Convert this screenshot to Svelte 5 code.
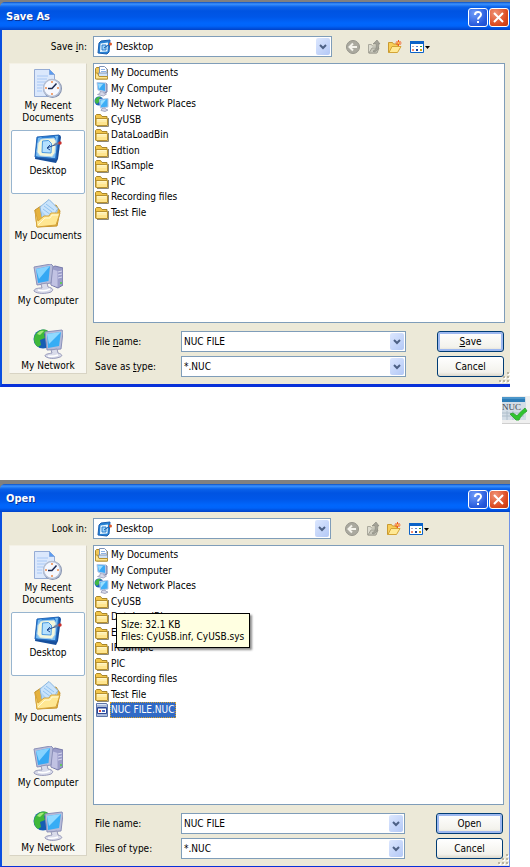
<script lang="ts">
  //! Save and Open file dialogs for NUC tables, with the toolbar button between them
  interface FileEntry {
    name: string;
    icon: string;
  }

  interface Dialog {
    id: string;
    title: string;
    look: string[];
    nameLabel: string[];
    typeLabel: string[];
    action: string[];
    files: FileEntry[];
    selected?: string;
    tip?: string[];
  }

  const places = [
    { name: 'My Recent Documents', icon: 'recent' },
    { name: 'Desktop', icon: 'desktop' },
    { name: 'My Documents', icon: 'documents' },
    { name: 'My Computer', icon: 'computer' },
    { name: 'My Network', icon: 'network' },
  ];

  const desktopFiles: FileEntry[] = [
    { name: 'My Documents', icon: 'docfolder' },
    { name: 'My Computer', icon: 'pc' },
    { name: 'My Network Places', icon: 'net' },
    ...['CyUSB', 'DataLoadBin', 'Edtion', 'IRSample', 'PIC', 'Recording files', 'Test File'].map(
      (name) => ({ name, icon: 'folder' })
    ),
  ];

  // Labels are split as [before, access key, after]
  const dialogs: Dialog[] = [
    {
      id: 'save',
      title: 'Save As',
      look: ['Save ', 'i', 'n:'],
      nameLabel: ['File ', 'n', 'ame:'],
      typeLabel: ['Save as ', 't', 'ype:'],
      action: ['', 'S', 'ave'],
      files: desktopFiles,
    },
    {
      id: 'open',
      title: 'Open',
      look: ['Look in:', '', ''],
      nameLabel: ['File name:', '', ''],
      typeLabel: ['Files of type:', '', ''],
      action: ['Open', '', ''],
      files: [...desktopFiles, { name: 'NUC FILE.NUC', icon: 'nuc' }],
      selected: 'NUC FILE.NUC',
      tip: ['Size: 32.1 KB', 'Files: CyUSB.inf, CyUSB.sys'],
    },
  ];

  let fileNames = $state(['NUC FILE', 'NUC FILE']);
</script>

{#snippet keyed(parts: string[])}{parts[0]}{#if parts[1]}<u>{parts[1]}</u>{/if}{parts[2]}{/snippet}

{#snippet chevron()}
  <span class="drop">
    <svg width="8" height="6" viewBox="0 0 8 6"><path d="M1 1l3 3 3-3" fill="none" stroke="#4d6185" stroke-width="2" /></svg>
  </span>
{/snippet}

{#snippet smallIcon(kind: string)}
  <svg class="small" width="16" height="16" viewBox="0 0 16 16" aria-hidden="true">
    {#if kind === 'folder'}
      <path d="M3 14.5h11.5V6" fill="none" stroke="#8d8878" />
      <path d="M1.5 13V3.5l1-1h4l1.500 2H13v8.500z" fill="#f2c64a" stroke="#a8862c" />
      <path d="M2 6.500h11.500v7H2z" fill="#ffe58e" stroke="#b8922f" />
      <path d="M3 7.500h9.500M3 9h9.500" stroke="#fff6c8" />
    {:else if kind === 'docfolder'}
      <path d="M1.500 13V3.500l1-1H6v2h7.500V14h-11z" fill="#f0c758" stroke="#a8862c" />
      <path d="M5.500 1.500h5l2.500 2.500v8H5.500z" fill="#fff" stroke="#7d93b8" />
      <path d="M7 4.500h4M7 6.500h5" stroke="#8cb2e6" />
      <path d="M4.500 8h9v5h-9z" fill="#cfe2f8" stroke="#8396b0" />
      <path d="M1.500 14V8h2l1.500 3.500h8.500V14z" fill="#ffe590" stroke="#b8922f" />
    {:else if kind === 'pc'}
      <path d="M11 2l2 1v8l-2 1z" fill="#a8accb" stroke="#7c80a4" />
      <path d="M3 1.500l8.500 .5v8.500l-7.500-1.500z" fill="#39a9f5" stroke="#b4c6e4" />
      <path d="M4 2.500l5 .5-4 5z" fill="#9adcff" />
      <path d="M6 10.500l4 .5v1.500l2.500 .5-3 2-6-1.500 2.500-1z" fill="#d5d8e8" stroke="#9094b4" stroke-width=".7" />
    {:else if kind === 'net'}
      <circle cx="5" cy="5" r="4.500" fill="#1c62bc" />
      <path d="M1 4c1-3 4-4 6-3L5 3l1 2-3 3-2-2z" fill="#42b845" />
      <path d="M5.500 3.500l8.500-1v8.500l-7.500 1z" fill="#3eaff7" stroke="#b4c6e4" />
      <path d="M6.500 4.500l5.500-1-5 6z" fill="#9be0ff" />
      <path d="M8 12.500l3-.5 1 1.500 2 .5-3 1.500-4-1z" fill="#d5d8e8" stroke="#8c90b0" stroke-width=".7" />
    {:else if kind === 'nuc'}
      <path d="M2.500 1.500h10l1 1v12h-11z" fill="#a9b9d8" stroke="#5c74a8" />
      <path d="M3 2.500h9" stroke="#dce6f8" />
      <path d="M3.500 5.500h9v6h-9z" fill="#fff" stroke="#2b4796" />
      <path d="M4 6h8" stroke="#2b4796" />
      <path d="M5 8h2v2H5z" fill="#d84242" /><path d="M8 8h3v2H8z" fill="#4669c2" />
    {:else if kind === 'desk'}
      <path d="M2 4l2-2 9-1-1 12-2 2-9-1z" fill="#2782d4" stroke="#1d60b0" />
      <path d="M3.500 4.500l7.500-1-.5 9-7.500.5z" fill="#e9f7ff" />
      <path d="M5 6h4v5H5z" fill="#9bd4fa" stroke="#2d7ccc" />
      <path d="M7 9l6-4" stroke="#175ba8" /><circle cx="13.500" cy="5" r="1.500" fill="#e1592b" />
    {/if}
  </svg>
{/snippet}

{#snippet placeIcon(kind: string)}
  <svg width="30" height="30" viewBox="0 0 30 30" aria-hidden="true">
    {#if kind === 'recent'}
      <path d="M1.500 .5h15l5 5v22h-20z" fill="#dbe8fc" stroke="#96acd4" />
      <path d="M16.500.5l5 5h-5z" fill="#5c9cf0" stroke="#7fa6df" />
      <path d="M4 7h11M4 10h10M4 13h8M4 16h6M4 19h5M4 22h5" stroke="#a8c8f5" />
      <circle cx="19.500" cy="19.500" r="9.500" fill="#7f8caa" />
      <circle cx="19" cy="19" r="8.500" fill="#f5f8ff" stroke="#b4bfd4" stroke-width="1.500" />
      <path d="M19 12v2M19 24v2M12 19h2M24 19h2" stroke="#f08a4a" stroke-width="1.500" />
      <path d="M23.500 14.500L19 19.500h-4" fill="none" stroke="#1f2c50" stroke-width="1.500" />
    {:else if kind === 'desktop'}
      <path d="M4 4l23-3 1 2-3 22-2 4-21-4z" fill="#174f9c" />
      <path d="M4 3l22-2-3 24-21-2z" fill="#2a7fd5" stroke="#2668b8" />
      <path d="M3 22l2-18 4-1c-5 5-5 13-2 20zM25 2l-3 22h-4c5-4 7-13 4-22z" fill="#79bdf2" />
      <path d="M8 5l13-1 2 3-1 12-3 4-12-1-3-4 1-9z" fill="#f4f7dc" stroke="#a5cff0" />
      <path d="M9.500 7l6-.5 3 3-.5 9.500-9-.5z" fill="#b4e0ff" stroke="#4a98e0" />
      <path d="M17 11l-3 3 3 2M14 14l10-4" fill="none" stroke="#234b8f" />
      <path d="M21 11l5-2" stroke="#6c7fa0" stroke-width="2" />
      <circle cx="27" cy="9" r="1.700" fill="#c9302c" />
    {:else if kind === 'documents'}
      <path d="M2 11l6-4 2 3 13-4 4 6-3 15-20 1z" fill="#e6b23d" stroke="#c4922c" />
      <path d="M7 8l9-7.500 9 9-8 13-8-4z" fill="#c9e3fb" stroke="#88b4de" />
      <path d="M11 7l8 6M13 5l8 6M10 10l8 6" stroke="#91c3f0" />
      <path d="M9 12l8 9 8-11-3 12-12 1z" fill="#a9d2f7" />
      <path d="M2 11l3 11 6-5h5l2-3h9l-4 12-19 2z" fill="#ffe792" stroke="#d6a43a" />
      <path d="M5 26l7-7h5l2-3h6" fill="none" stroke="#fff9d6" />
    {:else if kind === 'computer'}
      <path d="M18 4l4-2 8 2v17l-5 3-7-3z" fill="#9a9cc8" stroke="#7678a8" />
      <path d="M18.500 5l6 2v16l-6-2z" fill="#c1c2e3" />
      <path d="M25 8l4-1M25 11l4-1M25 14l4-1" stroke="#d8d9f0" />
      <circle cx="28" cy="19" r="1" fill="#51d63b" />
      <path d="M1 3l17-3 2 2-2 17-14 2z" fill="#b7bcda" stroke="#8b90b8" />
      <path d="M3 5l14-3-1.500 15L5 19z" fill="#35a8f4" />
      <path d="M3 5l14-3-11 13z" fill="#86d3ff" />
      <path d="M8 20l6-1 1 4c5 1 6 3 3 5-5 2-14 2-17-1 0-2 3-3 8-3z" fill="#d9dbea" stroke="#9598b8" />
      <path d="M5 26c4 1 8 1 12-1" fill="none" stroke="#fff" stroke-width="1.500" />
    {:else if kind === 'network'}
      <circle cx="10" cy="10" r="9.500" fill="#155db4" />
      <path d="M2 6c3-5 9-7 13-4l-4 3 1 4-5 2 1 5-3 2C1 15 0 10 2 6z" fill="#3fb83b" />
      <path d="M4 5c2-3 5-4 7-3L7 6z" fill="#a3ea78" />
      <path d="M12 3l17-2 1 2-2 17-14 1z" fill="#b7bcda" stroke="#8b90b8" />
      <path d="M14 5l14-2-2 14-11 2z" fill="#37adf5" />
      <path d="M14 5l14-2-12 12z" fill="#90d9ff" />
      <path d="M18 21l6-1 1 4c4 1 5 3 2 4-5 2-12 2-15-1 0-2 3-2 7-3z" fill="#d9dbea" stroke="#9598b8" />
      <path d="M15 27c4 1 7 0 10-1" fill="none" stroke="#fff" stroke-width="1.500" />
    {/if}
  </svg>
{/snippet}

<main>
  {#each dialogs as dialog, index}
    {#if index > 0}
      <div class="between">
        <button class="nuc-button" aria-label="NUC">
          <svg width="28" height="28" viewBox="0 0 28 28">
            <path d="M0 0h28v28H0z" fill="#efefef" />
            <path d="M0 1h24v23H0z" fill="#d3dde6" />
            <path d="M0 1h23v5H0z" fill="#2c7db8" /><path d="M0 2h23" stroke="#6db0dc" />
            <path d="M0 17h22M0 20h22M5 15v9M11 15v9" stroke="#aebecb" />
            <text x="0" y="14" font-size="9" font-family="Liberation Serif, serif" fill="#3b444c">NUC</text>
            <path d="M8 18l3-1 4 3c3-4 6-6 8-8l2 3c-4 3-7 6-8 9h-3z" fill="#2fc52e" stroke="#36a93a" />
            <path d="M0 27.500h28" stroke="#cfcfcf" />
          </svg>
        </button>
      </div>
    {/if}

    <section class="frame {dialog.id}" aria-label={dialog.title}>
      <header>
        <h2>{dialog.title}</h2>
        <button class="caption help" aria-label="Help">
          <svg width="18" height="17" viewBox="0 0 18 17"><path d="M6 6c0-4 6-4 6-.5C12 8 9 8 9 10.500M9 12v2" fill="none" stroke="#fff" stroke-width="2" /></svg>
        </button>
        <button class="caption close" aria-label="Close">
          <svg width="18" height="17" viewBox="0 0 18 17"><path d="M4 4l9 9M13 4l-9 9" stroke="#fff" stroke-width="2" /></svg>
        </button>
      </header>

      <div class="body">
        <label class="look-label" for="{dialog.id}-look">{@render keyed(dialog.look)}</label>
        <div class="look">
          <div class="combo with-icon">
            {@render smallIcon('desk')}
            <select id="{dialog.id}-look"><option>Desktop</option></select>
            {@render chevron()}
          </div>
          <div class="tools">
            <button aria-label="Back">
              <svg width="16" height="16" viewBox="0 0 16 16">
                <circle cx="8" cy="8" r="6.500" fill="#aaa99f" stroke="#96958c" />
                <path d="M12 8H5M8 4.500L4.500 8 8 11.500" fill="none" stroke="#f4f3ec" stroke-width="2" />
              </svg>
            </button>
            <button aria-label="Up one level">
              <svg width="16" height="16" viewBox="0 0 16 16">
                <path d="M2.500 14V5.500h3l1 1.500h4l2 1-2 6z" fill="#dddcd0" stroke="#aaa99d" />
                <path d="M3 14l3-5h7l-2 5z" fill="#c9c8bc" stroke="#9f9e92" />
                <path d="M7 12c3-1 4-4 3-7H7l4-4 3 4h-1.500c1 4-1 7-4.500 8z" fill="#a3a297" stroke="#85847a" stroke-width=".6" />
              </svg>
            </button>
            <button aria-label="Create new folder">
              <svg width="16" height="16" viewBox="0 0 16 16">
                <path d="M1.500 13.500v-10h4l1 1.500H11v3l-2 5z" fill="#f8ce58" stroke="#c99a30" />
                <path d="M2 13.500L5 7.500h9l-3.500 6z" fill="#ffe994" stroke="#d3a437" />
                <path d="M11.500 1v6M8.500 4h6M9.500 2l4 4M13.500 2l-4 4" stroke="#f2561d" />
                <circle cx="11.500" cy="4" r="1" fill="#ffd24a" />
              </svg>
            </button>
            <button aria-label="View menu">
              <svg width="22" height="16" viewBox="0 0 22 16">
                <path d="M2.500 2.500h13v11h-13z" fill="#fff" stroke="#0b62c8" />
                <path d="M2 2h14v3H2z" fill="#0b62c8" />
                <path d="M4 7h2v1H4z" fill="#b5a9bd" /><path d="M8 7h2v1H8z" fill="#5d87d8" /><path d="M12 7h2v1h-2z" fill="#2f9a32" />
                <path d="M4 10h2v2H4z" fill="#f28a70" /><path d="M8 10h2v2H8z" fill="#123f99" /><path d="M12 10h2v2h-2z" fill="#d29b10" />
                <path d="M17 7h5l-2.500 3z" fill="#000" />
              </svg>
            </button>
          </div>
        </div>

        <nav>
          {#each places as place}
            <button class="place" class:active={place.name === 'Desktop'}>
              {@render placeIcon(place.icon)}
              <span>{place.name}</span>
            </button>
          {/each}
        </nav>

        <div class="content">
          <div class="files">
            <ul>
              {#each dialog.files as file}
                <li>
                  <button class="file" class:selected={file.name === dialog.selected}>
                    {@render smallIcon(file.icon)}
                    <span>{file.name}</span>
                  </button>
                </li>
              {/each}
            </ul>
            {#if dialog.tip}
              <div class="tip" role="tooltip">
                {#each dialog.tip as line}
                  <div>{line}</div>
                {/each}
              </div>
            {/if}
          </div>

          <form onsubmit={(e) => e.preventDefault()}>
            <label for="{dialog.id}-name">{@render keyed(dialog.nameLabel)}</label>
            <div class="combo">
              <input id="{dialog.id}-name" type="text" bind:value={fileNames[index]} />
              {@render chevron()}
            </div>
            <button class="btn primary" type="submit">{@render keyed(dialog.action)}</button>
            <label for="{dialog.id}-type">{@render keyed(dialog.typeLabel)}</label>
            <div class="combo">
              <select id="{dialog.id}-type"><option>*.NUC</option></select>
              {@render chevron()}
            </div>
            <button class="btn" type="button">Cancel</button>
          </form>
        </div>

        <svg class="grip" width="11" height="11" viewBox="0 0 11 11" aria-hidden="true">
          <path d="M9 1h2v2H9zM5 5h2v2H5zM9 5h2v2H9zM1 9h2v2H1zM5 9h2v2H5zM9 9h2v2H9z" fill="#fff" />
          <path d="M8 0h2v2H8zM4 4h2v2H4zM8 4h2v2H8zM0 8h2v2H0zM4 8h2v2H4zM8 8h2v2H8z" fill="#b8b4a2" />
        </svg>
      </div>
    </section>
  {/each}
</main>

<style>
  :global(body) {
    background: #fff;
  }

  main {
    font-family: Tahoma, 'DejaVu Sans Condensed', 'Liberation Sans', sans-serif;
    font-size: 10px;
    line-height: 12px;
    color: #000;
  }

  button,
  input,
  select {
    margin: 0;
    padding: 0;
    border: 0;
    border-radius: 0;
    background: none;
    color: inherit;
    font: inherit;
  }

  svg {
    display: block;
    flex-shrink: 0;
  }

  .frame {
    margin-right: 20px;
    border-top: 2px solid #808080;
    background: #808080;
  }

  .frame.open {
    border-top-width: 4px;
  }

  header {
    display: flex;
    align-items: center;
    gap: 1px;
    height: 28px;
    box-sizing: border-box;
    padding: 2px 1px 0 6px;
    border-radius: 5px 0 0 0;
    background: linear-gradient(#0a4fc4 0, #3c93ff 2px, #0a62ea 5px, #0054e2 9px, #0057e8 15px, #0066fc 21px, #0064fa 24px, #0042c8 28px);
  }

  h2 {
    flex: 1;
    margin: 0;
    font: bold 12px/16px 'DejaVu Sans Condensed', sans-serif;
    font-size: 11px;
    color: #fff;
    text-shadow: 1px 1px #0a3296;
  }

  .caption {
    width: 20px;
    height: 19px;
    border: 1px solid #fff;
    border-radius: 3px;
    background: radial-gradient(circle at 30% 25%, #6f9bf8, #2458dc 70%, #1c4ccc);
  }

  .close {
    background: radial-gradient(circle at 30% 25%, #f09478, #dc4a20 65%, #c03810);
  }

  .body {
    position: relative;
    display: grid;
    grid-template-columns: 78px 1fr;
    gap: 6px;
    padding: 6px 5px 7px 7px;
    border: solid #0a4fe0;
    border-width: 0 0 3px 2px;
    border-bottom-color: #0831d9;
    background: #ece9d8;
  }

  .open .body {
    border-right: 1px solid #6f93e8;
    border-bottom-width: 1px;
  }

  .look-label {
    align-self: center;
    text-align: right;
  }

  .look {
    display: flex;
    gap: 13px;
  }

  .combo {
    display: flex;
    flex: 1;
    align-items: center;
    min-width: 0;
    height: 21px;
    box-sizing: border-box;
    border: 1px solid #7f9db9;
    padding: 1px;
    background: #fff;
  }

  .with-icon {
    padding-left: 3px;
  }

  .combo input,
  .combo select {
    flex: 1;
    width: 100%;
    min-width: 0;
    height: 17px;
    padding-left: 1px;
    appearance: none;
    outline: 0;
  }

  .with-icon select {
    padding-left: 3px;
  }

  .drop {
    display: flex;
    align-items: center;
    justify-content: center;
    width: 14px;
    height: 17px;
    border-radius: 2px;
    background: linear-gradient(135deg, #dce7fe, #b3c8f6);
    pointer-events: none;
  }

  .tools {
    display: flex;
    align-items: center;
    gap: 5px;
    width: 160px;
  }

  nav {
    display: flex;
    flex-direction: column;
    gap: 1px;
    height: 311px;
    box-sizing: border-box;
    padding: 1px;
    border: 1px solid #f4f1e6;
    border-right-color: #d8d4c4;
    border-bottom-color: #d8d4c4;
    background: #f8f7f1;
    overflow: hidden;
  }

  .place {
    display: flex;
    flex-direction: column;
    flex-shrink: 0;
    align-items: center;
    height: 64px;
    box-sizing: border-box;
    padding-top: 3px;
    border: 1px solid transparent;
    border-radius: 2px;
  }

  .place span {
    max-width: 72px;
    padding-top: 1px;
    white-space: nowrap;
  }

  .place:first-child span {
    max-width: 60px;
    white-space: normal;
  }

  .place.active {
    border-color: #98b5cf;
    background: #fff;
  }

  .content {
    min-width: 0;
  }

  .files {
    position: relative;
    height: 260px;
    box-sizing: border-box;
    border: 1px solid #7f9db9;
    background: #fff;
  }

  ul {
    margin: 0;
    padding: 1px 0;
    list-style: none;
  }

  li {
    display: flex;
    height: 16px;
  }

  li:nth-child(even) {
    height: 15px;
  }

  .file {
    display: flex;
    align-items: center;
  }

  .file span {
    padding: 1px 1px 1px 0;
    border: 1px solid transparent;
    white-space: nowrap;
  }

  .file.selected span {
    border: 1px dotted #d8a028;
    background: #316ac5;
    color: #fff;
  }

  .tip {
    position: absolute;
    left: 22px;
    top: 67px;
    padding: 5px 5px 4px 4px;
    border: 1px solid #000;
    background: #ffffe1;
    box-shadow: 2px 2px 2px rgba(0, 0, 0, 0.45);
    white-space: nowrap;
  }

  form {
    display: grid;
    grid-template-columns: 86px 1fr 67px;
    align-items: center;
    row-gap: 4px;
    padding: 8px 1px 0 2px;
  }

  form .combo {
    margin-right: 31px;
  }

  .btn {
    height: 21px;
    border: 1px solid #003c74;
    border-radius: 3px;
    background: linear-gradient(#fff, #f3f2ec 80%, #dcd8cc);
  }

  .primary {
    box-shadow: inset 0 0 0 2px #9db8f0;
  }

  .grip {
    position: absolute;
    right: 0;
    bottom: 1px;
  }

  .between {
    display: flex;
    justify-content: flex-end;
    padding: 9px 0 56px;
  }
</style>
